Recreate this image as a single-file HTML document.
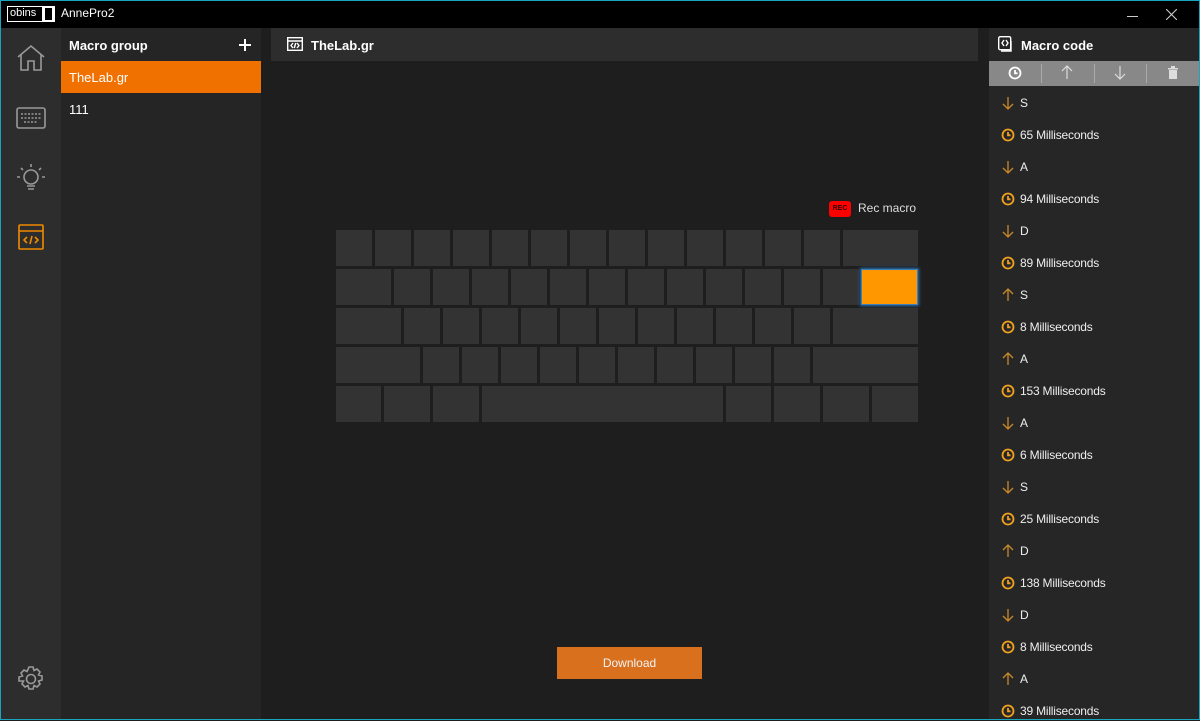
<!DOCTYPE html>
<html><head><meta charset="utf-8"><style>
*{margin:0;padding:0;box-sizing:border-box}
body{width:1200px;height:720px;overflow:hidden;background:#1e1e1e;font-family:"Liberation Sans",sans-serif;color:#fff;position:relative}
.a{position:absolute}
.k{position:absolute;background:#333;height:36px;width:36px}
.it{position:absolute;left:1001px;height:20px;font-size:12px;display:flex;align-items:center;color:#eee;letter-spacing:-0.2px}
.it svg{margin-right:5px}
</style></head><body>
<div class="a" style="left:0;top:0;width:1200px;height:28px;background:#000"></div>
<div class="a" style="left:7px;top:6px;width:48px;height:16px;background:#fff"></div>
<div class="a" style="left:8px;top:7px;width:34px;height:14px;background:#000;color:#fff;font-size:11px;line-height:13px;padding-left:2px">obins</div>
<div class="a" style="left:45px;top:8px;width:7px;height:12px;background:#000"></div>
<div class="a" style="left:61px;top:6px;font-size:12px">AnnePro2</div>
<div class="a" style="left:1127px;top:16px;width:11px;height:1px;background:#ccc"></div>
<svg class="a" style="left:1166px;top:9px" width="11" height="11" viewBox="0 0 11 11" stroke="#ccc" stroke-width="1.1"><path d="M0 0l11 11M11 0L0 11"/></svg>

<div class="a" style="left:0;top:28px;width:61px;height:692px;background:#2d2d2d"></div>
<svg class="a" style="left:16px;top:44px" width="30" height="28" viewBox="0 0 30 28" fill="none" stroke="#999" stroke-width="1.6"><path d="M2 13L15 2l13 11M5 11v15h7v-9h6v9h7V11"/></svg>
<svg class="a" style="left:16px;top:107px" width="30" height="22" viewBox="0 0 30 22" fill="none" stroke="#999" stroke-width="1.6"><rect x="1" y="1" width="28" height="20" rx="2"/><path d="M5 7h20M5 11h20M8 15h14" stroke-dasharray="2 1.5"/></svg>
<svg class="a" style="left:16px;top:163px" width="30" height="30" viewBox="0 0 30 30" fill="none" stroke="#999" stroke-width="1.6"><circle cx="15" cy="14" r="7"/><path d="M11 23h8M12 26h6M15 1v3M5 5l2 2M25 5l-2 2M1 14h3M26 14h3"/></svg>
<svg class="a" style="left:18px;top:224px" width="26" height="26" viewBox="0 0 26 26" fill="none" stroke="#f08a00" stroke-width="1.6"><rect x="1" y="1" width="24" height="24" rx="1"/><path d="M1 7h24M9 13l-3 3 3 3M17 13l3 3-3 3M14 12l-2 8"/></svg>
<svg class="a" style="left:17px;top:665px" width="28" height="28" viewBox="0 0 28 28" fill="none" stroke="#999" stroke-width="1.6"><circle cx="14" cy="14" r="4.5"/><path d="M12 2h4l1 3.5 3-1.5 3 3-1.5 3 3.5 1v4l-3.5 1 1.5 3-3 3-3-1.5-1 3.5h-4l-1-3.5-3 1.5-3-3 1.5-3L2 16v-4l3.5-1L4 8l3-3 3 1.5z"/></svg>

<div class="a" style="left:61px;top:28px;width:200px;height:692px;background:#252525"></div>
<div class="a" style="left:69px;top:38px;font-size:13px;font-weight:bold">Macro group</div>
<svg class="a" style="left:239px;top:39px" width="12" height="12" stroke="#fff" stroke-width="2"><path d="M6 0v12M0 6h12"/></svg>
<div class="a" style="left:61px;top:61px;width:200px;height:32px;background:#f07000"></div>
<div class="a" style="left:69px;top:70px;font-size:13px">TheLab.gr</div>
<div class="a" style="left:69px;top:102px;font-size:13px">111</div>

<div class="a" style="left:271px;top:28px;width:707px;height:33px;background:#2d2d2d"></div>
<svg class="a" style="left:287px;top:37px" width="16" height="14" viewBox="0 0 16 14" fill="none" stroke="#fff" stroke-width="1.4"><rect x=".7" y=".7" width="14.6" height="12.6"/><path d="M1 4h14M6 6l-2 2.5 2 2.5M10 6l2 2.5-2 2.5M8.7 6l-1.4 5"/></svg>
<div class="a" style="left:311px;top:38px;font-size:13px;font-weight:bold">TheLab.gr</div>

<div class="a" style="left:829px;top:201px;width:22px;height:16px;background:#f00;border-radius:3px;font-size:7px;color:#300;font-weight:bold;line-height:16px;text-align:center">REC</div>
<div class="a" style="left:858px;top:201px;font-size:12px;color:#ddd">Rec macro</div>

<div class="k" style="top:230px;left:336px"></div><div class="k" style="top:230px;left:375px"></div><div class="k" style="top:230px;left:414px"></div><div class="k" style="top:230px;left:453px"></div><div class="k" style="top:230px;left:492px"></div><div class="k" style="top:230px;left:531px"></div><div class="k" style="top:230px;left:570px"></div><div class="k" style="top:230px;left:609px"></div><div class="k" style="top:230px;left:648px"></div><div class="k" style="top:230px;left:687px"></div><div class="k" style="top:230px;left:726px"></div><div class="k" style="top:230px;left:765px"></div><div class="k" style="top:230px;left:804px"></div><div class="k" style="top:230px;left:843px;width:75px"></div>
<div class="k" style="top:269px;left:336px;width:55px"></div><div class="k" style="top:269px;left:394px"></div><div class="k" style="top:269px;left:433px"></div><div class="k" style="top:269px;left:472px"></div><div class="k" style="top:269px;left:511px"></div><div class="k" style="top:269px;left:550px"></div><div class="k" style="top:269px;left:589px"></div><div class="k" style="top:269px;left:628px"></div><div class="k" style="top:269px;left:667px"></div><div class="k" style="top:269px;left:706px"></div><div class="k" style="top:269px;left:745px"></div><div class="k" style="top:269px;left:784px"></div><div class="k" style="top:269px;left:823px"></div>
<div class="k" style="top:269px;left:861px;width:57px;background:#ff9800;border:1px solid #3a7fc0;box-shadow:0 0 3px 1px #2e6eaa"></div>
<div class="k" style="top:308px;left:336px;width:65px"></div><div class="k" style="top:308px;left:404px"></div><div class="k" style="top:308px;left:443px"></div><div class="k" style="top:308px;left:482px"></div><div class="k" style="top:308px;left:521px"></div><div class="k" style="top:308px;left:560px"></div><div class="k" style="top:308px;left:599px"></div><div class="k" style="top:308px;left:638px"></div><div class="k" style="top:308px;left:677px"></div><div class="k" style="top:308px;left:716px"></div><div class="k" style="top:308px;left:755px"></div><div class="k" style="top:308px;left:794px"></div><div class="k" style="top:308px;left:833px;width:85px"></div>
<div class="k" style="top:347px;left:336px;width:84px"></div><div class="k" style="top:347px;left:423px"></div><div class="k" style="top:347px;left:462px"></div><div class="k" style="top:347px;left:501px"></div><div class="k" style="top:347px;left:540px"></div><div class="k" style="top:347px;left:579px"></div><div class="k" style="top:347px;left:618px"></div><div class="k" style="top:347px;left:657px"></div><div class="k" style="top:347px;left:696px"></div><div class="k" style="top:347px;left:735px"></div><div class="k" style="top:347px;left:774px"></div><div class="k" style="top:347px;left:813px;width:105px"></div>
<div class="k" style="top:386px;left:336px;width:45px"></div><div class="k" style="top:386px;left:384px;width:46px"></div><div class="k" style="top:386px;left:433px;width:46px"></div><div class="k" style="top:386px;left:482px;width:241px"></div><div class="k" style="top:386px;left:726px;width:45px"></div><div class="k" style="top:386px;left:774px;width:46px"></div><div class="k" style="top:386px;left:823px;width:46px"></div><div class="k" style="top:386px;left:872px;width:46px"></div>

<div class="a" style="left:557px;top:647px;width:145px;height:32px;background:#d8701e;font-size:12px;text-align:center;line-height:32px;color:#f4f4f4">Download</div>

<div class="a" style="left:989px;top:28px;width:211px;height:692px;background:#262626"></div>
<svg class="a" style="left:998px;top:36px" width="16" height="17" viewBox="0 0 16 17" fill="none" stroke="#fff" stroke-width="1.4"><rect x=".7" y=".7" width="12" height="13" rx="1.5"/><path d="M6 4l-2 3 2 3M8 4l2 3-2 3M13 5v10H3"/></svg>
<div class="a" style="left:1021px;top:38px;font-size:13px;font-weight:bold">Macro code</div>
<div class="a" style="left:989px;top:61px;width:211px;height:25px;background:#888"></div>
<div class="a" style="left:1041px;top:64px;width:1px;height:19px;background:#aaa"></div>
<div class="a" style="left:1094px;top:64px;width:1px;height:19px;background:#aaa"></div>
<div class="a" style="left:1146px;top:64px;width:1px;height:19px;background:#aaa"></div>
<svg class="a" style="left:1008px;top:66px" width="14" height="14" viewBox="0 0 14 14" fill="none" stroke="#fff" stroke-width="1.8"><circle cx="7" cy="7" r="5.5"/><path d="M7 4v3.3h2.5"/></svg>
<svg class="a" style="left:1061px;top:65px" width="12" height="15" viewBox="0 0 12 15" fill="none" stroke="#ddd" stroke-width="1.2"><path d="M6 14V1M1 6l5-5 5 5"/></svg>
<svg class="a" style="left:1114px;top:65px" width="12" height="15" viewBox="0 0 12 15" fill="none" stroke="#ddd" stroke-width="1.2"><path d="M6 1v13M1 9l5 5 5-5"/></svg>
<svg class="a" style="left:1167px;top:66px" width="12" height="13" viewBox="0 0 12 13" fill="#ddd"><rect x="1" y="2" width="10" height="1.5"/><rect x="4" y="0" width="4" height="2"/><path d="M2 4h8v9H2z"/></svg>

<div class="it" style="top:93px"><svg width="14" height="14" viewBox="0 0 14 14" fill="none" stroke="#c98a2a" stroke-width="1.3"><path d="M7 1v12M2 8l5 5 5-5"/></svg>S</div>
<div class="it" style="top:125px"><svg width="14" height="14" viewBox="0 0 14 14" fill="none" stroke="#f0a020" stroke-width="1.8"><circle cx="7" cy="7" r="5.5"/><path d="M7 4v3.3h2.5"/></svg>65 Milliseconds</div>
<div class="it" style="top:157px"><svg width="14" height="14" viewBox="0 0 14 14" fill="none" stroke="#c98a2a" stroke-width="1.3"><path d="M7 1v12M2 8l5 5 5-5"/></svg>A</div>
<div class="it" style="top:189px"><svg width="14" height="14" viewBox="0 0 14 14" fill="none" stroke="#f0a020" stroke-width="1.8"><circle cx="7" cy="7" r="5.5"/><path d="M7 4v3.3h2.5"/></svg>94 Milliseconds</div>
<div class="it" style="top:221px"><svg width="14" height="14" viewBox="0 0 14 14" fill="none" stroke="#c98a2a" stroke-width="1.3"><path d="M7 1v12M2 8l5 5 5-5"/></svg>D</div>
<div class="it" style="top:253px"><svg width="14" height="14" viewBox="0 0 14 14" fill="none" stroke="#f0a020" stroke-width="1.8"><circle cx="7" cy="7" r="5.5"/><path d="M7 4v3.3h2.5"/></svg>89 Milliseconds</div>
<div class="it" style="top:285px"><svg width="14" height="14" viewBox="0 0 14 14" fill="none" stroke="#c98a2a" stroke-width="1.3"><path d="M7 13V1M2 6l5-5 5 5"/></svg>S</div>
<div class="it" style="top:317px"><svg width="14" height="14" viewBox="0 0 14 14" fill="none" stroke="#f0a020" stroke-width="1.8"><circle cx="7" cy="7" r="5.5"/><path d="M7 4v3.3h2.5"/></svg>8 Milliseconds</div>
<div class="it" style="top:349px"><svg width="14" height="14" viewBox="0 0 14 14" fill="none" stroke="#c98a2a" stroke-width="1.3"><path d="M7 13V1M2 6l5-5 5 5"/></svg>A</div>
<div class="it" style="top:381px"><svg width="14" height="14" viewBox="0 0 14 14" fill="none" stroke="#f0a020" stroke-width="1.8"><circle cx="7" cy="7" r="5.5"/><path d="M7 4v3.3h2.5"/></svg>153 Milliseconds</div>
<div class="it" style="top:413px"><svg width="14" height="14" viewBox="0 0 14 14" fill="none" stroke="#c98a2a" stroke-width="1.3"><path d="M7 1v12M2 8l5 5 5-5"/></svg>A</div>
<div class="it" style="top:445px"><svg width="14" height="14" viewBox="0 0 14 14" fill="none" stroke="#f0a020" stroke-width="1.8"><circle cx="7" cy="7" r="5.5"/><path d="M7 4v3.3h2.5"/></svg>6 Milliseconds</div>
<div class="it" style="top:477px"><svg width="14" height="14" viewBox="0 0 14 14" fill="none" stroke="#c98a2a" stroke-width="1.3"><path d="M7 1v12M2 8l5 5 5-5"/></svg>S</div>
<div class="it" style="top:509px"><svg width="14" height="14" viewBox="0 0 14 14" fill="none" stroke="#f0a020" stroke-width="1.8"><circle cx="7" cy="7" r="5.5"/><path d="M7 4v3.3h2.5"/></svg>25 Milliseconds</div>
<div class="it" style="top:541px"><svg width="14" height="14" viewBox="0 0 14 14" fill="none" stroke="#c98a2a" stroke-width="1.3"><path d="M7 13V1M2 6l5-5 5 5"/></svg>D</div>
<div class="it" style="top:573px"><svg width="14" height="14" viewBox="0 0 14 14" fill="none" stroke="#f0a020" stroke-width="1.8"><circle cx="7" cy="7" r="5.5"/><path d="M7 4v3.3h2.5"/></svg>138 Milliseconds</div>
<div class="it" style="top:605px"><svg width="14" height="14" viewBox="0 0 14 14" fill="none" stroke="#c98a2a" stroke-width="1.3"><path d="M7 1v12M2 8l5 5 5-5"/></svg>D</div>
<div class="it" style="top:637px"><svg width="14" height="14" viewBox="0 0 14 14" fill="none" stroke="#f0a020" stroke-width="1.8"><circle cx="7" cy="7" r="5.5"/><path d="M7 4v3.3h2.5"/></svg>8 Milliseconds</div>
<div class="it" style="top:669px"><svg width="14" height="14" viewBox="0 0 14 14" fill="none" stroke="#c98a2a" stroke-width="1.3"><path d="M7 13V1M2 6l5-5 5 5"/></svg>A</div>
<div class="it" style="top:701px"><svg width="14" height="14" viewBox="0 0 14 14" fill="none" stroke="#f0a020" stroke-width="1.8"><circle cx="7" cy="7" r="5.5"/><path d="M7 4v3.3h2.5"/></svg>39 Milliseconds</div>

<div class="a" style="left:0;top:0;width:1200px;height:720px;border:1px solid #19a5bd;pointer-events:none"></div>
</body></html>
